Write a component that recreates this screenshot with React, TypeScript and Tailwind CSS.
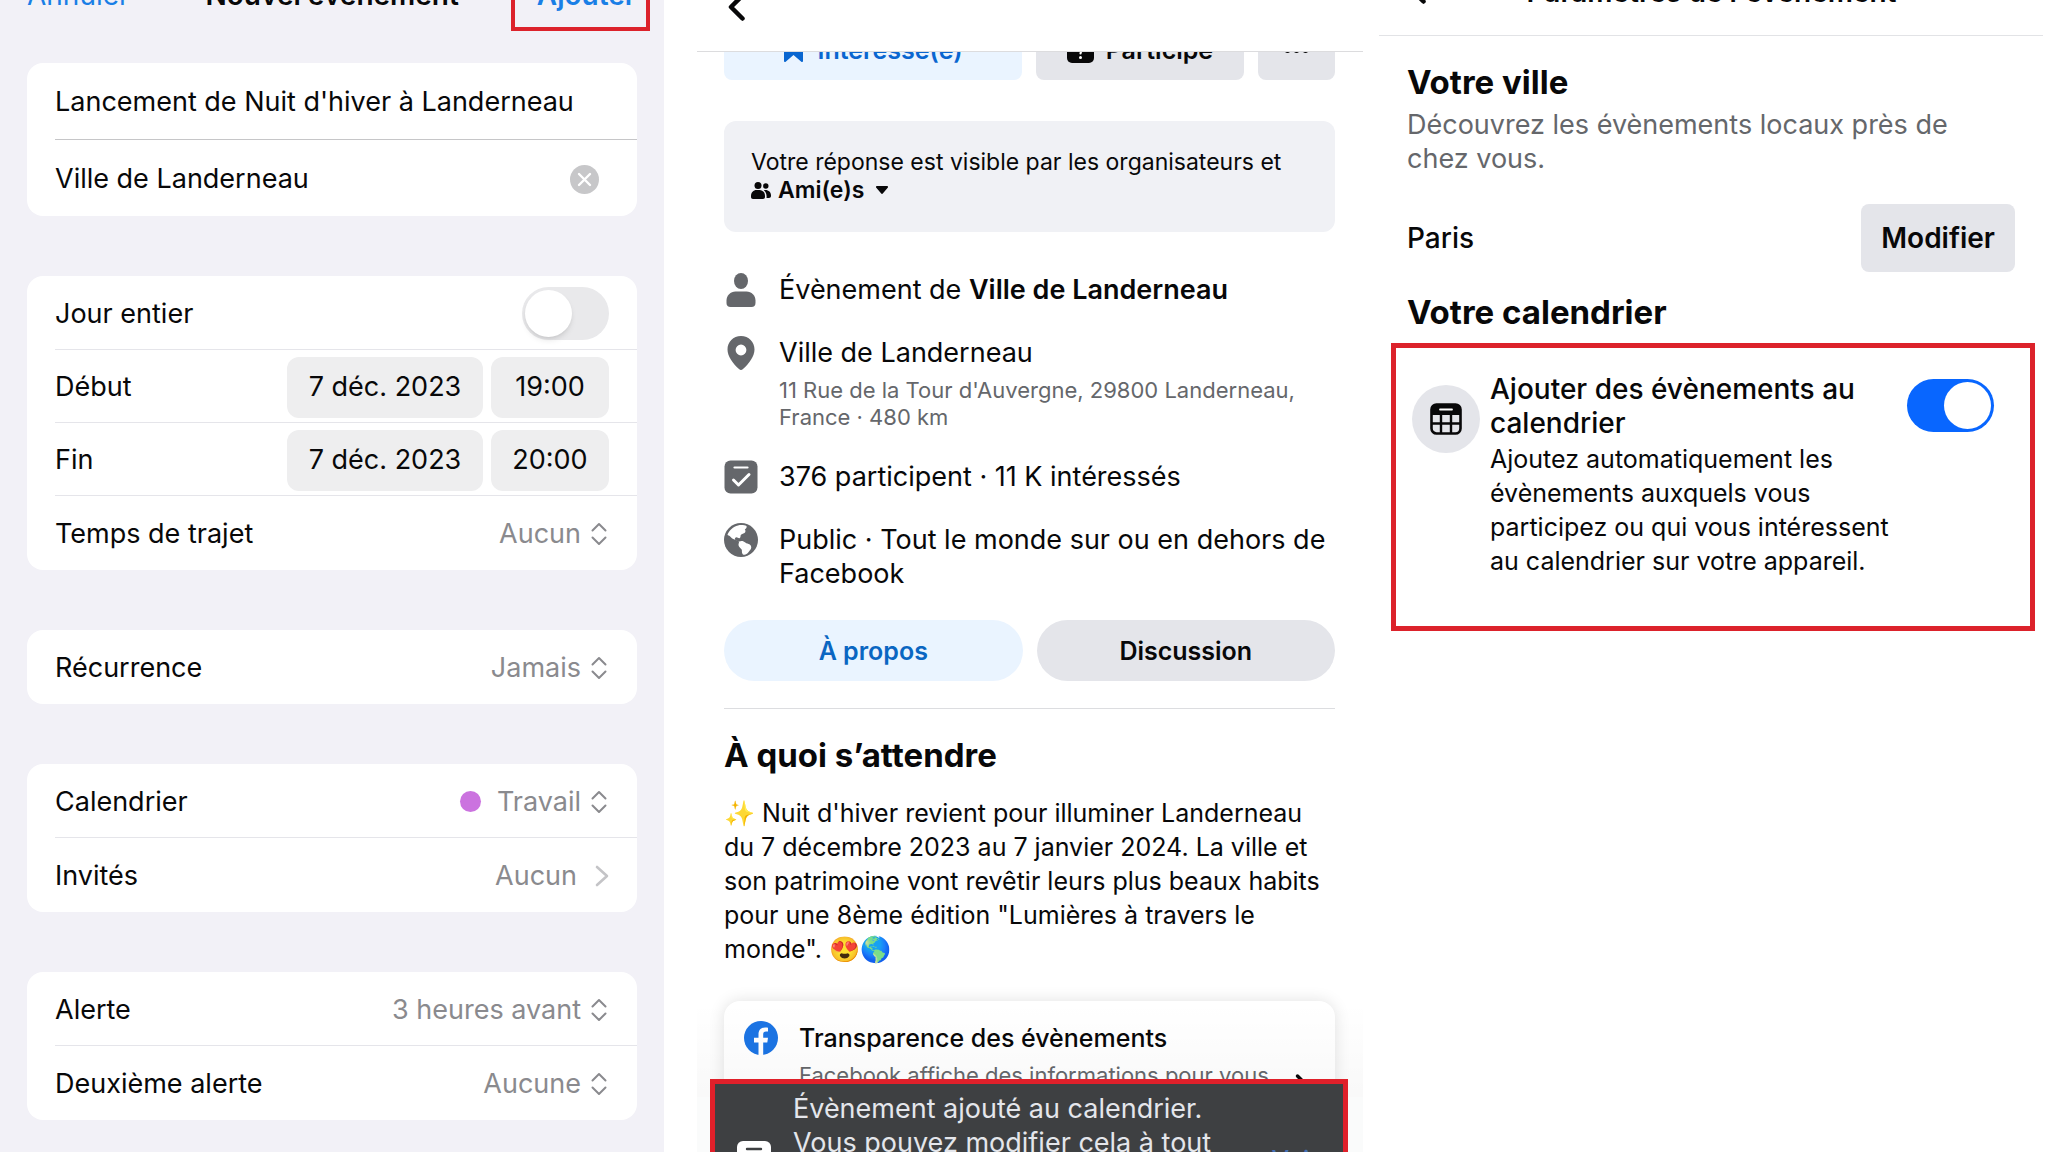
import React from 'react';
import { ChevronRight } from 'lucide-react';

const switchBase =
  "relative w-[87px] h-[53px] shrink-0 appearance-none rounded-full cursor-pointer before:absolute before:top-[3px] before:size-[47px] before:rounded-full before:bg-white before:content-['']";

function BackIcon() {
  return (
    <svg className="w-[18px] h-7" viewBox="0 0 18 28" fill="none" stroke="currentColor" strokeWidth="4.500" strokeLinecap="round" strokeLinejoin="round">
      <path d="M15.500 2.500 4 14l11.500 11.500" />
    </svg>
  );
}

function UpDownIcon() {
  return (
    <svg className="w-4 h-6 shrink-0" viewBox="0 0 16 24" fill="none" stroke="currentColor" strokeWidth="2" strokeLinecap="round" strokeLinejoin="round">
      <path d="M1.5 8.5 8 2l6.5 6.5M1.5 15.5 8 22l6.5-6.5" />
    </svg>
  );
}

function PersonIcon() {
  return (
    <svg className="size-[34px] shrink-0" viewBox="0 0 34 34" fill="currentColor">
      <ellipse cx="17" cy="8" rx="7" ry="8" />
      <path d="M2.500 30v-2.500c0-5 4-9 9-9h11c5 0 9 4 9 9V30c0 2.500-1.500 4-4 4h-21c-2.500 0-4-1.500-4-4Z" />
    </svg>
  );
}

function PinIcon() {
  return (
    <svg className="size-[34px] shrink-0" viewBox="0 0 34 34" fill="currentColor" fillRule="evenodd">
      <path d="M17 0c7.800 0 13.500 6 13.500 13.400 0 6.800-5.500 14-11.500 19.600-1.300 1.300-2.700 1.300-4 0C9 27.400 3.500 20.200 3.500 13.400 3.500 6 9.200 0 17 0Zm0 8.600a5.400 5.400 0 1 0 0 10.800 5.400 5.400 0 0 0 0-10.800Z" />
    </svg>
  );
}

function CheckIcon() {
  return (
    <svg className="size-[34px] shrink-0" viewBox="0 0 34 34" fill="none">
      <rect x="0.500" y="0.500" width="33" height="33" rx="6" fill="currentColor" />
      <path d="M10.500 7.500h13" stroke="#fff" strokeWidth="2.200" strokeLinecap="round" />
      <path d="m9.500 20 5 5L25 14.500" stroke="#fff" strokeWidth="3" strokeLinecap="round" strokeLinejoin="round" />
    </svg>
  );
}

function GlobeIcon() {
  return (
    <svg className="size-[34px] shrink-0" viewBox="0 0 34 34">
      <circle cx="17" cy="17" r="17" fill="currentColor" />
      <path fill="#fff" d="M14 2.500c3-.8 6.500-.4 8.500.6.6 1.500-.4 2.600-1.700 3.400 1 1 .9 2.600-.3 3.500-1.500 1-3.200.9-3.800 2.300-.5 1.200.3 1.800-.9 2.700-1.300.8-2-.9-3.500-.8-1.600.2-1.900 2-.7 2.900 1.300.9 2.600.4 3.700 1.500 1.800-1.300 4.500-.6 6 .9 1.200 1.200 3 1 4.500 2.100 2 1.500 1.800 3.800.4 5.500-1.300 1.500-2.600 4.400-5.700 4.600-2.400.1-2.700-2.500-2.600-4.300.1-1.900-2.800-2.500-3.300-4.900-.4-1.700.8-2.900.3-3.900C13.600 17.200 8.900 16.800 6.700 14c-1.300-1.600-2.900-1.300-3.200-2.200C5 7.600 9.300 3.700 14 2.500Z" />
    </svg>
  );
}

function FriendsIcon() {
  return (
    <svg className="w-5 h-[17px]" viewBox="0 0 20 17" fill="currentColor">
      <circle cx="7" cy="3.500" r="3.500" />
      <circle cx="14.800" cy="4" r="2.700" />
      <path d="M0 14c0-3.600 2.400-6 5.500-6h3c3.100 0 5.500 2.400 5.500 6v1c0 1.200-.8 2-2 2H2c-1.200 0-2-.8-2-2v-1ZM12.800 8.200c4.200-.8 7.200 1.600 7.200 5.300v.5c0 1.200-.8 2-2 2h-2.500c.4-3.200-.4-6-2.700-7.800Z" />
    </svg>
  );
}

function FacebookIcon() {
  return (
    <svg className="size-[34px] shrink-0" viewBox="0 0 34 34">
      <circle cx="17" cy="17" r="17" fill="#1b74e4" />
      <path fill="#fff" d="M14.500 34V21.500H10v-4.700h4.500v-3.300c0-4.600 2.700-7 6.600-7 1.500 0 2.900.2 2.900.2v3.900h-2c-2 0-2.800 1.200-2.800 2.600v3.600H24l-.7 4.700h-4.100V34Z" />
    </svg>
  );
}

function CalendarIcon() {
  return (
    <svg className="size-8" viewBox="0 0 32 32" fill="none" stroke="currentColor">
      <rect x="1.500" y="1.500" width="29" height="29" rx="5" strokeWidth="2.600" />
      <path d="M1 11V6.500C1 3.500 3.500 1 6.500 1h19C28.500 1 31 3.500 31 6.500V12H1Z" fill="currentColor" stroke="none" />
      <path d="M11 12v18M21 12v18M1 20.500h30" strokeWidth="2.400" />
      <path d="M10 6.500h12" stroke="#fff" strokeWidth="1.800" strokeLinecap="round" />
    </svg>
  );
}

function Group({ children }: { children: React.ReactNode }) {
  return <section className="rounded-2xl bg-white overflow-hidden divide-y divide-[#e5e5ea] pl-7">{children}</section>;
}

function Row({ children, height = 'h-[74px]' }: { children: React.ReactNode; height?: string }) {
  return <div className={`flex items-center justify-between pt-[2px] pr-7 ${height}`}>{children}</div>;
}

function SelectRow({ id, label, value, dot }: { id: string; label: string; value: string; dot?: boolean }) {
  return (
    <Row>
      <label htmlFor={id}>{label}</label>
      <div className="flex items-center gap-[10px] pr-[2px] text-[#8a8a8e]">
        {dot && <span className="size-[21px] rounded-full bg-[#cb73df] mr-[6px]" />}
        <select id={id} className="appearance-none bg-transparent field-sizing-content" defaultValue={value}>
          <option>{value}</option>
        </select>
        <UpDownIcon />
      </div>
    </Row>
  );
}

function DateRow({ label, date, time }: { label: string; date: string; time: string }) {
  return (
    <Row height="h-[73px]">
      <span>{label}</span>
      <div className="flex gap-2">
        <button className="w-[196px] h-[61px] rounded-xl bg-[#eeeeef]">{date}</button>
        <button className="w-[118px] h-[61px] rounded-xl bg-[#eeeeef]">{time}</button>
      </div>
    </Row>
  );
}

function NewEvent() {
  return (
    <div className="min-w-0 bg-[#f2f1f7] text-[27px] leading-9 px-[27px]">
      <header className="flex justify-between -mt-[23px] h-[54px] text-[28px] -mr-[13px]">
        <button className="self-start text-[#1a7fe6]">Annuler</button>
        <h1 className="font-semibold pl-6">Nouvel évènement</h1>
        <button className="font-semibold text-[#1a7fe6] border-4 border-t-0 border-[#dc222b] pl-[22px] pr-[10px] pb-[14px]">Ajouter</button>
      </header>

      <div className="flex flex-col gap-[60px] mt-8">
        <section className="rounded-2xl bg-white divide-y divide-[#c6c6c8] pl-7">
          <Row height="h-[77px]">
            <input aria-label="Titre" className="w-full outline-none" defaultValue="Lancement de Nuit d'hiver à Landerneau" />
          </Row>
          <Row height="h-[76px]">
            <input aria-label="Lieu" className="flex-1 min-w-0 outline-none" defaultValue="Ville de Landerneau" />
            <button aria-label="Effacer" className="mr-[10px]">
              <svg className="size-[29px]" viewBox="0 0 29 29" fill="none">
                <circle cx="14.500" cy="14.500" r="14.500" fill="#c7c7c9" />
                <path d="m9 9 11 11M20 9 9 20" stroke="#fff" strokeWidth="2.400" strokeLinecap="round" />
              </svg>
            </button>
          </Row>
        </section>

        <Group>
          <Row>
            <label htmlFor="all-day">Jour entier</label>
            <input id="all-day" type="checkbox" role="switch" className={`${switchBase} bg-[#e9e9eb] before:left-[3px] before:shadow-md`} />
          </Row>
          <DateRow label="Début" date="7 déc. 2023" time="19:00" />
          <DateRow label="Fin" date="7 déc. 2023" time="20:00" />
          <SelectRow id="travel" label="Temps de trajet" value="Aucun" />
        </Group>

        <Group>
          <SelectRow id="repeat" label="Récurrence" value="Jamais" />
        </Group>

        <Group>
          <SelectRow id="calendar" label="Calendrier" value="Travail" dot />
          <Row>
            <span>Invités</span>
            <button className="flex items-center gap-[18px] text-[#8a8a8e]">
              Aucun
              <svg className="w-[14px] h-[22px]" viewBox="0 0 14 22" fill="none" stroke="#c4c4c7" strokeWidth="2.600" strokeLinecap="round" strokeLinejoin="round">
                <path d="m2 2 10 9-10 9" />
              </svg>
            </button>
          </Row>
        </Group>

        <Group>
          <SelectRow id="alert" label="Alerte" value="3 heures avant" />
          <SelectRow id="alert-2" label="Deuxième alerte" value="Aucune" />
        </Group>
      </div>
    </div>
  );
}

function EventDetails() {
  return (
    <div className="relative min-w-0 ml-[33px] h-screen overflow-hidden text-[27px] leading-[34px]">
      <header className="relative z-10 flex items-start h-[52px] bg-white border-b border-[#dcdcde] pl-[30px]">
        <button aria-label="Retour" className="-mt-[7px]"><BackIcon /></button>
      </header>

      <main className="-mt-[33px] pl-[27px] pr-7">
        <div className="grid grid-cols-[297fr_207fr_77fr] gap-[14px] text-[25px] font-semibold">
          <button className="flex items-center justify-center gap-[15px] h-[61px] rounded-lg bg-[#eaf4ff] text-[#0a66d0]">
            <svg className="w-[19px] h-6" viewBox="0 0 19 24" fill="currentColor">
              <path d="M0 3c0-2 1-3 3-3h13c2 0 3 1 3 3v20c0 1-1 1.300-1.700.7L9.500 17l-7.800 6.700C1 24.300 0 24 0 23Z" />
            </svg>
            Intéressé(e)
          </button>
          <button className="flex items-center justify-center gap-3 h-[61px] rounded-lg bg-[#e4e5ea]">
            <svg className="w-[27px] h-[26px]" viewBox="0 0 27 26" fill="none">
              <rect width="27" height="26" rx="5" fill="currentColor" />
              <path d="M10 11c.5-4 7-4 7 0 0 2.500-3.500 2.500-3.500 5.500" stroke="#fff" strokeWidth="2.200" strokeLinecap="round" />
              <circle cx="13.500" cy="20.500" r="1.500" fill="#fff" />
            </svg>
            Participe
          </button>
          <button aria-label="Plus" className="flex items-center justify-center gap-1 h-[61px] pt-[2px] rounded-lg bg-[#e4e5ea]">
            <span className="size-[5px] rounded-full bg-black" />
            <span className="size-[5px] rounded-full bg-black" />
            <span className="size-[5px] rounded-full bg-black" />
          </button>
        </div>

        <div className="mt-[41px] rounded-xl bg-[#f0f1f5] pt-[27px] pb-7 pl-[27px] text-[23px] leading-7">
          <p>Votre réponse est visible par les organisateurs et</p>
          <button className="flex items-center font-semibold">
            <FriendsIcon />
            <span className="ml-[7px] mr-3">Ami(e)s</span>
            <svg className="w-3 h-2" viewBox="0 0 12 8" fill="currentColor"><path d="M1.200 0h9.600c1.200 0 1.500 1 .9 1.800L7 7.300c-.6.800-1.400.8-2 0L.3 1.800C-.3 1 0 0 1.200 0Z" /></svg>
          </button>
        </div>

        <ul className="flex flex-col gap-[29px] mt-[41px]">
          <li className="flex gap-[21px] text-[#65676b]">
            <PersonIcon />
            <p className="text-[#080809]">Évènement de <strong className="font-semibold">Ville de Landerneau</strong></p>
          </li>
          <li className="flex gap-[21px] text-[#65676b]">
            <PinIcon />
            <div>
              <p className="text-[#080809]">Ville de Landerneau</p>
              <p className="mt-[7px] text-[22px] leading-[27px]">11 Rue de la Tour d'Auvergne, 29800 Landerneau, France · 480 km</p>
            </div>
          </li>
          <li className="flex gap-[21px] text-[#65676b]">
            <CheckIcon />
            <p className="text-[#080809]">376 participent · 11 K intéressés</p>
          </li>
          <li className="flex gap-[21px] text-[#65676b]">
            <GlobeIcon />
            <p className="text-[#080809]">Public · Tout le monde sur ou en dehors de Facebook</p>
          </li>
        </ul>

        <div className="grid grid-cols-2 gap-[14px] mt-[29px] text-[25px] font-semibold">
          <button className="h-[61px] rounded-full bg-[#eaf4ff] text-[#0a66c2]">À propos</button>
          <button className="h-[61px] rounded-full bg-[#e4e5ea]">Discussion</button>
        </div>

        <hr className="mt-[27px] border-[#dcdde0]" />

        <h2 className="mt-[26px] text-[33px] leading-10 font-bold">À quoi s’attendre</h2>
        <p className="mt-[21px] text-[25px]">
          ✨ Nuit d'hiver revient pour illuminer Landerneau du 7 décembre 2023 au 7 janvier 2024. La ville et son patrimoine vont revêtir leurs plus beaux habits pour une 8ème édition "Lumières à travers le monde". 😍🌎
        </p>

        <a href="#transparence" className="flex mt-[35px] rounded-2xl bg-white shadow-[0_0_16px_rgba(0,0,0,0.12)] pl-5 pr-5 pt-5 pb-10">
          <FacebookIcon />
          <div className="flex-1 ml-[21px]">
            <p className="text-[25px] font-medium">Transparence des évènements</p>
            <p className="mt-[7px] text-[22px] leading-[27px] text-[#65676b]">Facebook affiche des informations pour vous</p>
          </div>
          <ChevronRight className="self-end size-7 -mb-2" strokeWidth={3} />
        </a>
      </main>

      <div className="absolute inset-x-0 bottom-0 h-[150px] bg-linear-to-b from-transparent to-black/4">
        <div className="absolute inset-x-0 bottom-0 h-[55px] bg-[#fafbfb]" />
      </div>
      <div role="status" className="absolute left-[13px] right-[15px] -bottom-[84px] h-[157px] flex items-center border-[5px] border-[#e0202a] bg-[#3e4042] text-[#e4e6eb] pl-[22px] pr-6">
        <svg className="size-[34px] shrink-0" viewBox="0 0 34 34" fill="none">
          <rect width="34" height="34" rx="6" fill="#fff" />
          <path d="M10 8h14" stroke="#3e4042" strokeWidth="2.400" strokeLinecap="round" />
        </svg>
        <p className="flex-1 self-start ml-[22px] mt-2">Évènement ajouté au calendrier.<br />Vous pouvez modifier cela à tout</p>
        <button className="pt-1 text-[25px] font-medium text-[#4570b5]">Voir</button>
      </div>
    </div>
  );
}

function EventSettings() {
  return (
    <div className="min-w-0 ml-4 mr-[5px] leading-[34px]">
      <header className="grid grid-cols-[1fr_auto_1fr] -mt-[26px] h-[62px] border-b border-[#e2e3e6] pl-[29px] pr-7">
        <button aria-label="Retour" className="justify-self-start self-start pt-[2px]"><BackIcon /></button>
        <h1 className="text-[28px] leading-9 font-semibold">Paramètres de l'évènement</h1>
      </header>

      <div className="px-7">
        <h2 className="mt-[29px] text-[33px] leading-[34px] font-bold">Votre ville</h2>
        <p className="mt-[9px] text-[27px] leading-[34px] text-[#65676b] pr-6">Découvrez les évènements locaux près de chez vous.</p>
        <div className="flex items-center justify-between mt-7 text-[28px]">
          <span className="font-medium">Paris</span>
          <button className="h-[68px] px-5 rounded-lg bg-[#e4e5ea] font-semibold">Modifier</button>
        </div>
        <h2 className="mt-[23px] text-[33px] leading-[34px] font-bold">Votre calendrier</h2>
      </div>

      <section className="flex mt-[14px] ml-3 mr-2 border-[5px] border-[#dc222b] pt-6 pb-12 pl-4 pr-9">
        <div className="flex items-center justify-center size-[68px] shrink-0 mt-[13px] rounded-full bg-[#e4e5ea]">
          <CalendarIcon />
        </div>
        <div className="flex-1 ml-[10px] mr-3">
          <label htmlFor="add-events" className="block text-[28px] font-medium">Ajouter des évènements au calendrier</label>
          <p className="mt-[2px] text-[25px]">Ajoutez automatiquement les évènements auxquels vous participez ou qui vous intéressent au calendrier sur votre appareil.</p>
        </div>
        <input id="add-events" type="checkbox" role="switch" defaultChecked className={`${switchBase} mt-[7px] bg-[#0866ff] before:right-[3px]`} />
      </section>
    </div>
  );
}

export default function App() {
  return (
    <div className="grid grid-cols-[664fr_699fr_685fr] h-screen overflow-hidden bg-white font-['Inter','Liberation_Sans',sans-serif] text-[#080809]">
      <NewEvent />
      <EventDetails />
      <EventSettings />
    </div>
  );
}
